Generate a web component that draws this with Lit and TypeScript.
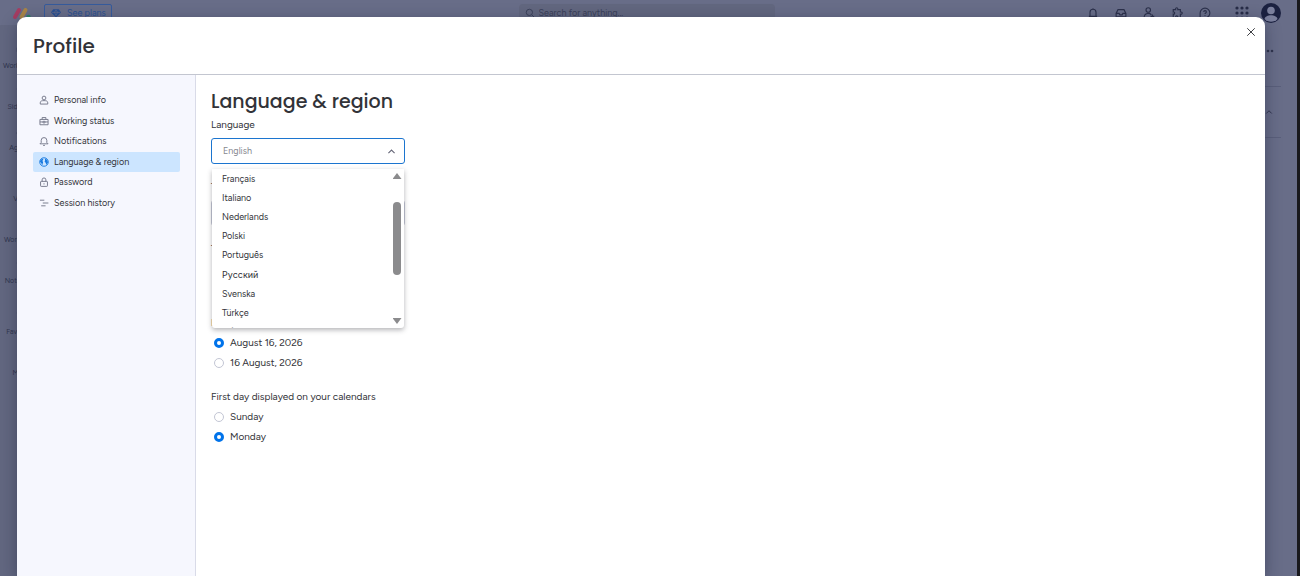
import { LitElement, html, css, svg } from "lit";
import { customElement, state } from "lit/decorators.js";

const icons: Record<string, unknown> = {
  bell: svg`<path d="M2.500 12.500h11M4 12.500V7a4 4 0 0 1 8 0v5.500M8 1.500v1.500M6.500 15h3"/>`,
  inbox: svg`<path d="M1.500 8.500 4 3.500h8l2.500 5v4.500h-13zM1.500 8.500H5.500l1 2h3l1-2h4"/>`,
  invite: svg`<circle cx="7" cy="4" r="3"/><path d="M1.500 14.500c0-7 8-7 9.500-4M1.500 14.500h7M12.500 10v5M10 12.500h5"/>`,
  puzzle: svg`<path d="M3 3.500h3.200c-.8-3.300 3.600-3.300 2.800 0h3.500v3.200c3.300-.8 3.300 3.600 0 2.800v4.500H9c.8-2.800-3.600-2.800-2.800 0H3V9.500c2.500.8 2.500-3.600 0-2.800z"/>`,
  help: svg`<path d="M1.500 14.500V8a6.500 6.500 0 1 1 6.500 6.500zM6.300 6.500c0-2.300 3.500-2.300 3.500 0C9.800 8 8 7.800 8 9.300M8 11v1"/>`,
  user: svg`<circle cx="8" cy="4.800" r="3"/><path d="M2 14.500v-2c0-3 2.500-3.500 6-3.500s6 .5 6 3.500v2z"/>`,
  briefcase: svg`<path d="M1.500 5.500h13v8.500h-13zM5 5.500v-3h6v3M1.500 9.500h5M9.500 9.500h5M6.500 8.500h3v2.500h-3z"/>`,
  alert: svg`<path d="M1.500 12.500h13l-2-2V7a4.500 4.500 0 0 0-9 0v3.500zM6.500 15h3"/>`,
  globe: svg`<circle cx="8" cy="8" r="6.800"/><path class="solid" d="M2 5.500 5.500 2.500l1.500 1.500-1.500 2 1 2.500-1.200 4.500-1.600-3-2.200-3zM9.500 2l4 3 .8 4-2.600 3.500-1-3.500-1.700-1.500.7-2.500z"/>`,
  lock: svg`<rect x="2.500" y="7" width="11" height="8" rx="1"/><path d="M5 7V4.500a3 3 0 0 1 6 0V7M8 10v2"/>`,
  history: svg`<path d="M1.500 3.500h7M6 8h9M3.500 12.500h7"/>`,
  search: svg`<circle cx="7" cy="7" r="5"/><path d="m11 11 4 4"/>`,
  close: svg`<path d="m2 2 12 12M14 2 2 14"/>`,
  up: svg`<path d="m2.500 11 5.500-5.500 5.500 5.500"/>`,
  gem: svg`<path class="solid" d="M3.500 2h9L16 7l-8 8L0 7z"/><path class="facet" d="M1.500 7h13M5.500 7 8 12l2.500-5L8 3z"/>`,
  home: svg`<path d="M2 7.500 8 2l6 5.500V14H2z"/>`,
  spark: svg`<path d="M8 1.500 10 6l4.500 2L10 10l-2 4.500L6 10 1.500 8 6 6z"/>`,
  ring: svg`<circle cx="8" cy="8" r="5.500"/>`,
  star: svg`<path d="m8 1.500 2 4.500 4.500.5-3.500 3 1 5-4-2.500-4 2.500 1-5-3.500-3L6 6z"/>`,
  more: svg`<circle class="solid" cx="3" cy="8" r="1.500"/><circle class="solid" cx="8" cy="8" r="1.500"/><circle class="solid" cx="13" cy="8" r="1.500"/>`,
};

const icon = (name: string) => html`
  <svg class="icon" viewBox="0 0 16 16" aria-hidden="true">${icons[name]}</svg>`;

@customElement("app-root")
export class AppRoot extends LitElement {
  @state() private section = "Language & region";
  @state() private timeFormat = "24 hours";
  @state() private dateFormat = "August 16, 2026";
  @state() private firstDay = "Monday";

  static styles = css`
    :host {
      display: block;
      position: relative;
      height: 100vh;
      overflow: hidden;
      box-sizing: border-box;
      background: #686d88;
      border-right: 3px solid #19191d;
      color: #323338;
      font: 9px/12px Figtree, Inter, "Liberation Sans", sans-serif;
    }
    * { box-sizing: border-box; }
    button, select, input { font: inherit; color: inherit; margin: 0; }
    button { border: 0; padding: 0; background: none; cursor: pointer; display: flex; }
    .icon { width: 10px; height: 10px; flex: none; display: block; fill: none; stroke: currentColor; stroke-width: 1.500; }
    .solid { fill: currentColor; stroke: none; }
    .facet { stroke: #686d88; stroke-width: 1; }

    .topbar { display: grid; grid-template-columns: 1fr 256px 1fr; align-items: center; height: 25px; padding: 0 16px 0 12px; color: #2c314b; }
    .brand { display: flex; align-items: center; gap: 12px; }
    .logo { width: 20px; height: 14px; }
    .plans { align-items: center; gap: 6px; height: 18px; padding: 0 5px 0 6px; border: 1px solid #365b9c; border-radius: 2px; color: #2a5092; }
    .search { display: flex; align-items: center; gap: 4px; height: 18px; padding: 0 6px; border-radius: 4px; background: #62677f; color: #3a3f58; }
    .search input { flex: 1; min-width: 0; border: 0; padding: 0; background: none; outline: 0; }
    .search input::placeholder { color: #3a3f58; opacity: 1; }
    .tools { display: flex; align-items: center; justify-content: flex-end; gap: 16px; }
    .tools .icon { width: 12px; height: 12px; }
    .tools .grid { width: 14px; height: 14px; fill: #272c47; stroke: none; margin-left: 8px; }
    .tools .avatar { width: 20px; height: 20px; margin-left: -4px; }

    .behind { display: flex; justify-content: space-between; height: 100%; color: #30354e; }
    .rail { display: flex; flex-direction: column; gap: 3px; width: 41px; padding-top: 18px; background: #626780; font-size: 7px; line-height: 8px; }
    .rail a { display: flex; flex-direction: column; align-items: center; gap: 9px; height: 38px; color: inherit; text-decoration: none; }
    .rail a:nth-child(3n + 4) { margin-top: 10px; }
    .side { display: flex; flex-direction: column; align-items: flex-start; width: 32px; padding: 17px 16px 0 0; }
    .side .dots { width: 9px; height: 18px; fill: currentColor; }
    .side .head { display: flex; align-items: center; width: 16px; height: 52px; margin-top: 26px; border-top: 1px solid #5a5f7b; border-bottom: 1px solid #5a5f7b; }
    .side .head .icon { width: 8px; height: 8px; stroke-width: 2; }

    .modal { position: absolute; inset: 17px 32px 0 17px; display: flex; flex-direction: column; border-radius: 9px 9px 0 0; overflow: hidden; background: #fff; box-shadow: 0 4px 16px rgba(20, 24, 50, 0.4); }
    .title { display: flex; justify-content: space-between; align-items: flex-start; height: 58px; padding: 10px 9px 0 16px; border-bottom: 1px solid #c3c6d0; }
    h1, h2 { margin: 0; font-family: Poppins, Figtree, sans-serif; font-weight: 500; font-size: 20px; line-height: 28px; }
    .title h1 { padding-top: 5px; }
    .title .icon { width: 10px; height: 10px; }
    .body { flex: 1; display: flex; min-height: 0; }
    nav { width: 179px; flex: none; padding: 15px 15px 15px 16px; background: #f6f7fe; border-right: 1px solid #d9dbe8; }
    nav .list { display: grid; grid-auto-rows: 1fr; height: 123px; }
    nav button { align-items: center; gap: 5px; width: 100%; padding: 0 6px; border-radius: 2px; text-align: left; }
    nav .icon { color: #74778a; }
    nav .on { background: #cce5ff; }
    nav .on .icon { color: #1a7be0; }

    .page { flex: 1; padding: 10px 15px; }
    .page h2 { padding-top: 3px; font-size: 19px; }
    .field { display: flex; flex-direction: column; gap: 6px; width: 194px; margin-top: 2px; margin-bottom: 16px; position: relative; }
    .label, legend { font-size: 10px; line-height: 14px; padding: 0; }
    .control { position: relative; display: block; }
    select { appearance: none; display: block; width: 100%; height: 26px; padding: 0 11px; border: 1px solid #c3c6d4; border-radius: 3px; background: #fff; color: #85878f; outline: 0; }
    .open select { border-color: #1c75cf; }
    .control .icon { position: absolute; right: 9px; top: 9px; width: 9px; height: 9px; pointer-events: none; color: #676879; stroke-width: 2; }
    .menu { position: absolute; z-index: 1; left: 1px; right: 1px; top: 51px; height: 159px; display: flex; background: #fff; border-radius: 0 0 3px 3px; box-shadow: 0 2px 5px rgba(40, 40, 50, 0.35); overflow: hidden; }
    ul { flex: 1; display: grid; grid-auto-rows: 1fr; align-items: center; height: 173px; margin: 0; padding: 0; list-style: none; }
    li { padding-left: 10px; }
    .bar { display: flex; flex-direction: column; align-items: center; width: 14px; padding: 4px 0; }
    .bar i { width: 9px; height: 6px; background: #8b8b8d; clip-path: polygon(50% 0, 100% 100%, 0 100%); }
    .bar i:last-child { clip-path: polygon(0 0, 100% 0, 50% 100%); }
    .track { flex: 1; padding-top: 23px; }
    .thumb { width: 8px; height: 73px; border-radius: 4px; background: #8b8b8d; }

    fieldset { border: 0; margin: 0 0 20px; padding: 0; min-width: 0; }
    .radio { display: flex; align-items: center; gap: 6px; height: 14px; margin-top: 6px; padding-left: 3px; width: max-content; font-size: 10px; }
    input[type="radio"] { appearance: none; width: 10px; height: 10px; border: 1px solid #c3c6d4; border-radius: 50%; background: #fff; }
    input[type="radio"]:checked { border: 3px solid #0073ea; }
  `;

  private radios(name: string, title: string, options: string[], value: string, set: (v: string) => void) {
    return html`<fieldset>
      <legend>${title}</legend>
      ${options.map((o) => html`<label class="radio">
        <input type="radio" name=${name} .checked=${o === value} @change=${() => set(o)} />${o}
      </label>`)}
    </fieldset>`;
  }

  render() {
    const sections = [
      ["user", "Personal info"], ["briefcase", "Working status"], ["alert", "Notifications"],
      ["globe", "Language & region"], ["lock", "Password"], ["history", "Session history"],
    ];
    const languages = ["Français", "Italiano", "Nederlands", "Polski", "Português", "Русский", "Svenska", "Türkçe", "Tiếng Việt"];
    const rail = [
      ["home", "Workspace"], ["spark", "Sidekick"], ["user", "Agents"], ["ring", "Vibe"],
      ["up", "Workflows"], ["spark", "Notetaker"], ["star", "Favorites"], ["more", "More"],
    ];
    return html`
      <header class="topbar">
        <div class="brand">
          <svg class="logo" viewBox="0 0 20 14" stroke-width="4" stroke-linecap="round">
            <path d="M3 11 7 4" stroke="#a63d62"/><path d="m9.500 11 4-7" stroke="#a98545"/><circle cx="16.500" cy="11" r="2.300" fill="#2d8264"/>
          </svg>
          <button class="plans">${icon("gem")}See plans</button>
        </div>
        <label class="search">${icon("search")}<input aria-label="Search" placeholder="Search for anything..." /></label>
        <div class="tools">
          ${["bell", "inbox", "invite", "puzzle", "help"].map((n) => html`<button aria-label=${n}>${icon(n)}</button>`)}
          <button aria-label="Apps"><svg class="grid" viewBox="0 0 14 14">
            ${[2, 7, 12].map((y) => [2, 7, 12].map((x) => svg`<circle cx=${x} cy=${y} r="1.600"/>`))}
          </svg></button>
          <button aria-label="Account"><svg class="avatar" viewBox="0 0 20 20">
            <circle cx="10" cy="10" r="10" fill="#1b2140"/><circle cx="10" cy="7.500" r="3.800" fill="#7b809d"/>
            <path d="M3.500 16c1-5 12-5 13 0-3 3.500-10 3.500-13 0z" fill="#7b809d"/>
          </svg></button>
        </div>
      </header>
      <div class="behind">
        <div class="rail">${rail.map(([i, t]) => html`<a href="#">${icon(i)}${t}</a>`)}</div>
        <div class="side">
          <svg class="dots" viewBox="0 0 9 18"><circle cx="3" cy="9" r="1.300"/><circle cx="7" cy="9" r="1.300"/></svg>
          <div class="head">${icon("up")}</div>
        </div>
      </div>
      <section class="modal" role="dialog" aria-label="Profile">
        <div class="title"><h1>Profile</h1><button aria-label="Close">${icon("close")}</button></div>
        <div class="body">
          <nav><div class="list">${sections.map(([i, t]) => html`
            <button class=${t === this.section ? "on" : ""} @click=${() => (this.section = t)}>${icon(i)}${t}</button>`)}
          </div></nav>
          <main class="page">
            <h2>Language &amp; region</h2>
            <div class="field open">
              <label class="label" for="lang">Language</label>
              <div class="control"><select id="lang"><option>English</option></select>${icon("up")}</div>
              <div class="menu">
                <ul role="listbox" aria-label="Language">${languages.map((l) => html`<li role="option">${l}</li>`)}</ul>
                <div class="bar"><i></i><div class="track"><div class="thumb"></div></div><i></i></div>
              </div>
            </div>
            <div class="field">
              <label class="label" for="zone">Timezone</label>
              <div class="control"><select id="zone"><option></option></select></div>
            </div>
            ${this.radios("time", "Time format", ["12 hours", "24 hours"], this.timeFormat, (v) => (this.timeFormat = v))}
            ${this.radios("date", "Date format", ["August 16, 2026", "16 August, 2026"], this.dateFormat, (v) => (this.dateFormat = v))}
            ${this.radios("day", "First day displayed on your calendars", ["Sunday", "Monday"], this.firstDay, (v) => (this.firstDay = v))}
          </main>
        </div>
      </section>`;
  }
}
